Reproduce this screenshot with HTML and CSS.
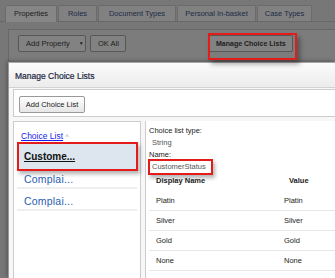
FILE: index.html
```html
<!DOCTYPE html>
<html>
<head>
<meta charset="utf-8">
<link rel="stylesheet" href="styles.css">
</head>
<body>
<div class="page">
  <div class="tabs">
    <div class="tab tab-active w-prop">Properties</div>
    <div class="tab w-roles">Roles</div>
    <div class="tab w-doc">Document Types</div>
    <div class="tab w-pers">Personal In-basket</div>
    <div class="tab w-case">Case Types</div>
  </div>
  <div class="toolbar">
    <div class="tbtn w-add">Add Property <span class="caret">&#9660;</span></div>
    <div class="tbtn w-ok">OK All</div>
    <div class="tbtn tbtn-bold w-manage">Manage Choice Lists</div>
  </div>
</div>
<div class="hl hl-manage"></div>

<div class="dialog">
  <div class="dlg-head">Manage Choice Lists</div>
  <div class="dlg-body">
    <div class="dlg-tools">
      <div class="btn">Add Choice List</div>
    </div>
    <div class="panes">
      <div class="left-pane">
        <div class="sort-link"><span class="link">Choice List</span> <span class="sort-caret">&#94;</span></div>
        <div class="sel-item"><span>Custome...</span></div>
        <div class="item item-first">Complai...</div>
        <div class="item item-next">Complai...</div>
      </div>
      <div class="right-pane">
        <div class="label">Choice list type:</div>
        <div class="value">String</div>
        <div class="label">Name:</div>
        <div class="name-box">CustomerStatus</div>
        <div class="grid-head">
          <div class="c1">Display Name</div>
          <div class="c2">Value</div>
        </div>
        <div class="grid-row"><div class="c1">Platin</div><div class="c2">Platin</div></div>
        <div class="grid-row"><div class="c1">Silver</div><div class="c2">Silver</div></div>
        <div class="grid-row"><div class="c1">Gold</div><div class="c2">Gold</div></div>
        <div class="grid-row"><div class="c1">None</div><div class="c2">None</div></div>
      </div>
    </div>
  </div>
</div>
</body>
</html>
```
FILE: styles.css
```css
html, body {
  margin: 0;
  padding: 0;
}
body {
  width: 335px;
  height: 278px;
  overflow: hidden;
  background: #777777;
  font-family: "Liberation Sans", Arial, sans-serif;
  position: relative;
}
.page {
  height: 278px;
  overflow: hidden;
}
.tabs {
  display: flex;
  gap: 1px;
  padding: 5px 0 0 5px;
  height: 16px;
  border-bottom: 1px solid #686868;
}
.tab {
  height: 15px;
  line-height: 16px;
  text-align: center;
  font-size: 7.5px;
  color: #1c2c48;
  background: #818181;
  border: 1px solid #6b6b6b;
  border-bottom: none;
  border-radius: 2px 2px 0 0;
  box-sizing: content-box;
}
.tab-active {
  background: #868686;
  color: #1e1e1e;
  height: 16px;
  margin-bottom: -1px;
}
.w-prop { width: 50px; }
.w-roles { width: 37px; }
.w-doc { width: 76px; }
.w-pers { width: 77px; }
.w-case { width: 53px; }

.toolbar {
  margin: 7px 0 0 8px;
  height: 40px;
  border: 1px solid #686868;
  border-right: none;
  background: #7c7c7c;
  display: flex;
  align-items: flex-start;
  gap: 4px;
  padding: 5px 0 0 9px;
}
.tbtn {
  height: 15px;
  line-height: 15px;
  border: 1px solid #575757;
  border-radius: 2px;
  background: #828282;
  font-size: 7.5px;
  color: #1e1e1e;
  box-sizing: content-box;
  padding-left: 7px;
}
.tbtn-bold {
  font-weight: bold;
  font-size: 7px;
}
.caret {
  font-size: 5px;
  margin-left: 7px;
  vertical-align: 1px;
}
.w-add { width: 59px; }
.w-ok { width: 27px; }
.w-manage { width: 76px; margin-left: 78px; }

.hl {
  position: absolute;
  border: 2px solid #e31b1b;
  box-sizing: border-box;
  box-shadow: 3px 4px 5px rgba(0, 0, 0, 0.35);
  z-index: 3;
}
.hl-manage {
  left: 208px;
  top: 33px;
  width: 89px;
  height: 27px;
}

.dialog {
  position: absolute;
  left: 8px;
  top: 62px;
  width: 326px;
  height: 215px;
  overflow: hidden;
  background: #f7f7f7;
  border-left: 1px solid #9a9a9a;
  border-top: 1px solid #a8a8a8;
  box-shadow: -1px -1px 4px rgba(0, 0, 0, 0.3);
  z-index: 2;
}
.dlg-head {
  height: 24px;
  line-height: 26px;
  padding-left: 6px;
  font-size: 8.5px;
  color: #1b2742;
  -webkit-text-stroke: 0.2px #1b2742;
  background: linear-gradient(#fbfbfb, #ececec);
  border-bottom: 1px solid #d2d2d2;
}
.dlg-body {
  padding: 1px 0 0 4px;
}
.dlg-tools {
  height: 28px;
  background: #ffffff;
  border: 1px solid #cccccc;
  border-right: none;
  padding: 6px 0 0 5px;
  box-sizing: border-box;
}
.btn {
  width: 66px;
  height: 17px;
  line-height: 16px;
  box-sizing: border-box;
  border: 1px solid #999999;
  border-radius: 2px;
  background: linear-gradient(#ffffff, #e6e6e6);
  font-size: 7.5px;
  color: #222222;
  text-align: center;
}
.panes {
  display: flex;
  gap: 4px;
  margin-top: 4px;
}
.left-pane {
  width: 126px;
  height: 160px;
  background: #ffffff;
  border: 1px solid #cccccc;
  padding-top: 9px;
  box-sizing: content-box;
}
.sort-link {
  padding-left: 7px;
  font-size: 8.5px;
  line-height: 11px;
  height: 11px;
}
.link {
  color: #1a1aee;
  text-decoration: underline;
}
.sort-caret {
  color: #999999;
  font-size: 7px;
}
.sel-item {
  margin: 0 0 0 3px;
  width: 121px;
  height: 29px;
  box-sizing: border-box;
  border: 2px solid #e31b1b;
  background: #dde5ee;
  box-shadow: 2px 3px 4px rgba(0, 0, 0, 0.3);
  padding-left: 5px;
  line-height: 25px;
  font-size: 10px;
  font-weight: bold;
  color: #111111;
}
.sel-item span {
  text-decoration: underline;
}
.item {
  margin: 0 3px 0 3px;
  padding-left: 7px;
  line-height: 16px;
  font-size: 10.5px;
  letter-spacing: 0.2px;
  color: #2a5cb3;
  border-bottom: 2px solid #efefef;
}
.item-first {
  padding-top: 0;
}
.item-next {
  padding-top: 4px;
}
.right-pane {
  flex: 1;
  height: 165px;
  background: #ffffff;
  border-left: 1px solid #cccccc;
  padding: 4px 0 0 3px;
  font-size: 7.5px;
  color: #222222;
}
.label {
  line-height: 12px;
  height: 12px;
}
.value {
  line-height: 12px;
  height: 12px;
  padding-left: 3px;
  color: #555555;
}
.name-box {
  margin: -2px 0 0 -1px;
  width: 65px;
  height: 16px;
  box-sizing: border-box;
  border: 2px solid #e31b1b;
  padding-left: 2px;
  line-height: 12px;
  color: #555555;
  box-shadow: 2px 3px 4px rgba(0, 0, 0, 0.3);
}
.grid-head {
  display: flex;
  height: 16px;
  line-height: 11px;
  font-weight: bold;
}
.grid-head .c1 {
  width: 128px;
  padding-left: 7px;
}
.grid-head .c2 {
  padding-left: 5px;
}
.grid-row {
  display: flex;
  height: 19px;
  line-height: 19px;
  border-bottom: 1px solid #e6e6e6;
}
.grid-row .c1 {
  width: 128px;
  padding-left: 7px;
}
```
